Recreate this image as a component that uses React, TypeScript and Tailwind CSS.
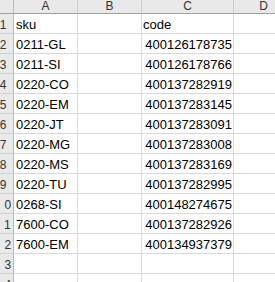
import React from "react";

const rows: [string, string][] = [
  ["sku", "code"],
  ["0211-GL", "400126178735"],
  ["0211-SI", "400126178766"],
  ["0220-CO", "400137282919"],
  ["0220-EM", "400137283145"],
  ["0220-JT", "400137283091"],
  ["0220-MG", "400137283008"],
  ["0220-MS", "400137283169"],
  ["0220-TU", "400137282995"],
  ["0268-SI", "400148274675"],
  ["7600-CO", "400137282926"],
  ["7600-EM", "400134937379"],
  ["", ""],
  ["", ""],
];

const font = { fontFamily: '"Liberation Sans", Arial, sans-serif' };

export default function App() {
  return (
    <div className="w-[275px] h-[282px] overflow-hidden bg-white" style={font}>
      <div className="grid grid-cols-[14px_64px_64px_92px_60px] w-max">
        {/* header row */}
        <div className="h-[14px] bg-[#e9e9e9] border-r border-b border-r-[#b8b8b8] border-b-[#9f9f9f]" />
        {["A", "B", "C", "D"].map((l) => (
          <div
            key={l}
            className="h-[14px] bg-[#e9e9e9] border-r border-b border-r-[#cfcfcf] border-b-[#9f9f9f] text-[12px] leading-[13px] text-center text-[#333]"
          >
            {l}
          </div>
        ))}
        {rows.map(([a, c], i) => (
          <React.Fragment key={i}>
            <div className="h-[20px] bg-[#e9e9e9] border-r border-b border-r-[#b8b8b8] border-b-[#d2d2d2] overflow-hidden">
              <div
                className={`w-[30px] ml-[-12px] text-center text-[12px] leading-[22px] text-[#333] ${
                  i + 1 >= 10 ? "tracking-[5px] pl-[3px]" : ""
                }`}
              >
                {i + 1}
              </div>
            </div>
            <div className="h-[20px] border-r border-b border-[#d9d9d9] pl-[2px] text-[13px] leading-[22px] text-black overflow-hidden whitespace-nowrap">
              {a}
            </div>
            <div className="h-[20px] border-r border-b border-[#d9d9d9]" />
            <div
              className={`h-[20px] border-r border-b border-[#d9d9d9] text-[13px] leading-[22px] text-black overflow-hidden whitespace-nowrap ${
                i === 0 ? "pl-[1px] text-left" : "pr-[1px] text-right"
              }`}
            >
              {c}
            </div>
            <div className="h-[20px] border-r border-b border-[#d9d9d9]" />
          </React.Fragment>
        ))}
      </div>
    </div>
  );
}
